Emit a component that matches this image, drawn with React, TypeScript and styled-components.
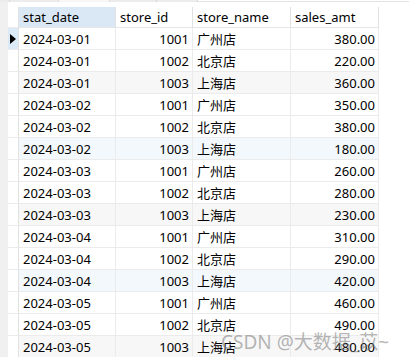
import React from 'react'
import styled, {createGlobalStyle} from 'styled-components'

type Row = {date: string; id: number; name: string; amt: string}

const rows: Row[] = [
  {date: '2024-03-01', id: 1001, name: '广州店', amt: '380.00'},
  {date: '2024-03-01', id: 1002, name: '北京店', amt: '220.00'},
  {date: '2024-03-01', id: 1003, name: '上海店', amt: '360.00'},
  {date: '2024-03-02', id: 1001, name: '广州店', amt: '350.00'},
  {date: '2024-03-02', id: 1002, name: '北京店', amt: '380.00'},
  {date: '2024-03-02', id: 1003, name: '上海店', amt: '180.00'},
  {date: '2024-03-03', id: 1001, name: '广州店', amt: '260.00'},
  {date: '2024-03-03', id: 1002, name: '北京店', amt: '280.00'},
  {date: '2024-03-03', id: 1003, name: '上海店', amt: '230.00'},
  {date: '2024-03-04', id: 1001, name: '广州店', amt: '310.00'},
  {date: '2024-03-04', id: 1002, name: '北京店', amt: '290.00'},
  {date: '2024-03-04', id: 1003, name: '上海店', amt: '420.00'},
  {date: '2024-03-05', id: 1001, name: '广州店', amt: '460.00'},
  {date: '2024-03-05', id: 1002, name: '北京店', amt: '490.00'},
  {date: '2024-03-05', id: 1003, name: '上海店', amt: '480.00'},
]

const tabs = [9, 48, 50, 46, 40]

export default function App() {
  return (
    <Page>
      <GlobalStyle />
      <TabStrip>
        {tabs.map((w, i) => (
          <Tab key={i} $width={w} $active={i === 2} />
        ))}
        <TabLine />
      </TabStrip>
      <Body>
        <Frame />
        <GridArea>
          <Grid>
            <GutterCell />
            <HeadCell $selected>stat_date</HeadCell>
            <HeadCell>store_id</HeadCell>
            <HeadCell>store_name</HeadCell>
            <HeadCell>sales_amt</HeadCell>
            {rows.map((row, i) => {
              // every third row is shaded, grey and blue in turn
              const tint = i % 3 === 2 ? (i % 6 === 5 ? 'blue' : 'grey') : 'none'
              return (
                <React.Fragment key={i}>
                  <GutterCell $current={i === 0}>
                    {i === 0 && (
                      <svg width="6" height="10" viewBox="0 0 6 10">
                        <polygon points="0,0 6,5 0,10" fill="#000" />
                      </svg>
                    )}
                  </GutterCell>
                  <Cell $tint={tint}>{row.date}</Cell>
                  <Cell $tint={tint} $right>
                    {row.id}
                  </Cell>
                  <Cell $tint={tint}>{row.name}</Cell>
                  <Cell $tint={tint} $right>
                    {row.amt}
                  </Cell>
                </React.Fragment>
              )
            })}
          </Grid>
        </GridArea>
      </Body>
      <Watermark>CSDN @大数据_苡~</Watermark>
    </Page>
  )
}

const GlobalStyle = createGlobalStyle`
  body {
    margin: 0;
    background: #fff;
  }
`

const Page = styled.div`
  position: relative;
  width: 409px;
  height: 357px;
  overflow: hidden;
  background: #fff;
  font-family: 'Noto Sans', 'Noto Sans CJK SC', sans-serif;
  font-size: 13px;
  color: #000;
`

const TabStrip = styled.div`
  display: flex;
  height: 2px;
`

const Tab = styled.div<{$width: number; $active?: boolean}>`
  width: ${(p) => p.$width}px;
  background: ${(p) => (p.$active ? '#f7f7f7' : '#ececec')};
  border-right: 1px solid #d9d9d9;
`

const TabLine = styled.div`
  flex: 1;
  border-bottom: 1px solid #e3e3e3;
`

const Body = styled.div`
  display: flex;
  height: 355px;
`

const Frame = styled.div`
  width: 8px;
  background: #f0f0f0;
`

const GridArea = styled.div`
  flex: 1;
  padding-top: 5px;
`

const Grid = styled.div`
  display: grid;
  grid-template-columns: 11px 97px 77px 98px 88px;
  grid-template-rows: 21px;
  grid-auto-rows: 22px;
`

const GutterCell = styled.div<{$current?: boolean}>`
  display: flex;
  align-items: center;
  padding-left: 2px;
  background: ${(p) => (p.$current ? '#dce9f6' : '#fff')};
  border-right: 1px solid #e1e1e1;
  border-bottom: 1px solid #ebebeb;
`

const HeadCell = styled.div<{$selected?: boolean}>`
  display: flex;
  align-items: center;
  padding: 0 4px;
  white-space: nowrap;
  overflow: hidden;
  background: ${(p) => (p.$selected ? '#dae8f6' : '#fff')};
  border-right: 1px solid #e1e1e1;
  border-bottom: 1px solid #e6e6e6;
`

const tints: Record<string, string> = {
  none: '#fff',
  grey: '#f7f7f7',
  blue: '#f3f8fd',
}

const Cell = styled.div<{$tint: string; $right?: boolean}>`
  display: flex;
  align-items: center;
  justify-content: ${(p) => (p.$right ? 'flex-end' : 'flex-start')};
  padding: 0 3px 0 4px;
  white-space: nowrap;
  overflow: hidden;
  background: ${(p) => tints[p.$tint]};
  border-right: 1px solid #ebebeb;
  border-bottom: 1px solid #ebebeb;
`

const Watermark = styled.div`
  position: absolute;
  left: 221px;
  top: 327px;
  font-size: 19px;
  white-space: nowrap;
  color: rgba(120, 120, 120, 0.55);
  pointer-events: none;
`
